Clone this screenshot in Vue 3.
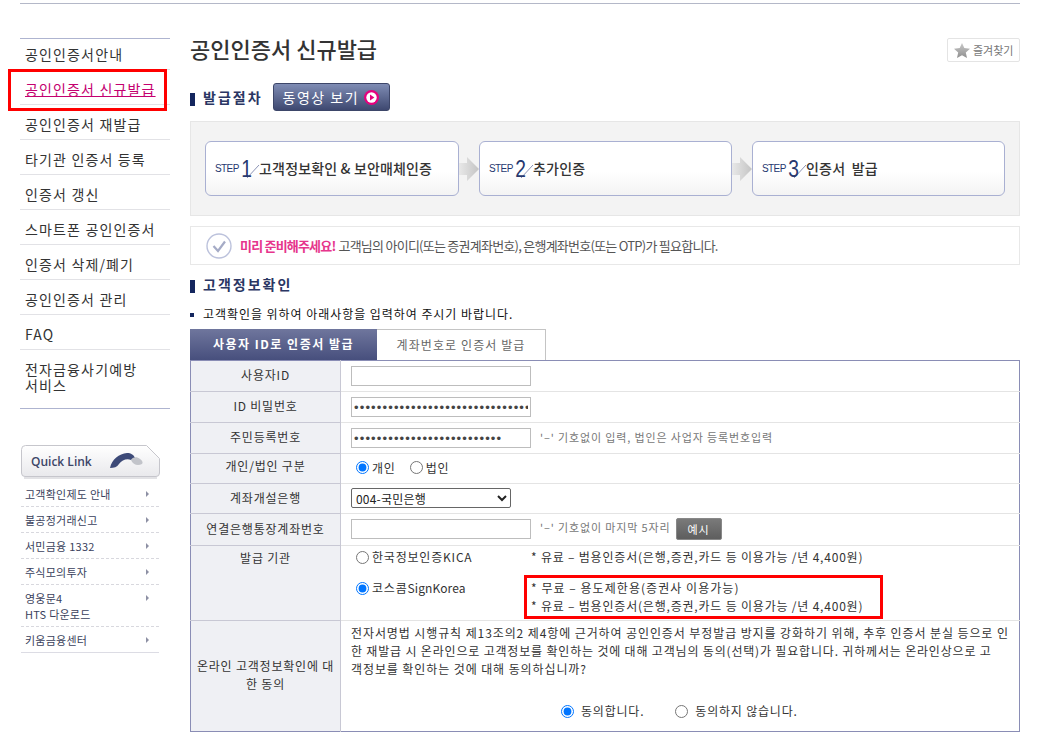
<script setup>
const menus = [
  { name: '공인인증서안내' },
  { name: '공인인증서 신규발급', on: true },
  { name: '공인인증서 재발급' },
  { name: '타기관 인증서 등록' },
  { name: '인증서 갱신' },
  { name: '스마트폰 공인인증서' },
  { name: '인증서 삭제/폐기' },
  { name: '공인인증서 관리' },
  { name: 'FAQ' },
  { name: '전자금융사기예방\n서비스' }
];

const links = ['고객확인제도 안내', '불공정거래신고', '서민금융 1332', '주식모의투자', '영웅문4\nHTS 다운로드', '키움금융센터'];

const steps = [
  { no: 1, text: '고객정보확인 & 보안매체인증' },
  { no: 2, text: '추가인증' },
  { no: 3, text: '인증서  발급' }
];
</script>

<template>
  <div class="page">
    <div class="topline"></div>
    <div class="wrap">
      <aside class="side">
        <ul class="menu">
          <li v-for="m in menus" :key="m.name" :class="{ on: m.on }"><span>{{ m.name }}</span></li>
        </ul>

        <div class="quick">
          <svg class="quick-bg" width="140" height="35" viewBox="0 0 140 35">
            <defs>
              <linearGradient id="qb" x1="0" y1="0" x2="0" y2="1">
                <stop offset="0" stop-color="#ffffff" />
                <stop offset="1" stop-color="#e9e9ec" />
              </linearGradient>
            </defs>
            <path d="M4.5 .5 H125.5 L138.5 13.5 V28 Q138.5 31.5 135 31.5 H4 Q.5 31.5 .5 28 V4.5 Q.5 .5 4.5 .5 Z" fill="url(#qb)" stroke="#c6c6cc" />
            <path d="M3 33 H136" stroke="#d8d8dc" stroke-width="1.5" />
          </svg>
          <span>Quick Link</span>
          <svg class="phone" width="34" height="16" viewBox="0 0 34 16">
            <path d="M0 15 C2 6 9 1 17 0 C21 0 24 2 25 5 L21 7 C17 5 12 7 9 11 C7 14 4 15 0 15 Z" fill="#3d4a78" />
            <path d="M21 7 C22 4 27 3 30 6 C33 8 33 10 32 11 C28 13 23 12 21 7 Z" fill="#c2c4ca" />
          </svg>
        </div>
        <ul class="links">
          <li v-for="l in links" :key="l"><span>{{ l }}</span><i></i></li>
        </ul>
      </aside>

      <main class="main">
        <div class="title-row">
          <h1>공인인증서 신규발급</h1>
          <a class="fav">
            <svg width="16" height="15" viewBox="0 0 16 15">
              <defs>
                <linearGradient id="star" x1="0" y1="0" x2="0" y2="1">
                  <stop offset="0" stop-color="#c9c9c9" />
                  <stop offset="1" stop-color="#8f8f8f" />
                </linearGradient>
              </defs>
              <polygon points="8,0 10.3,5 16,5.7 11.8,9.4 13,15 8,12.2 3,15 4.2,9.4 0,5.7 5.7,5" fill="url(#star)" />
            </svg>
            즐겨찾기
          </a>
        </div>

        <div class="head-row">
          <h2>발급절차</h2>
          <a class="movie">
            동영상 보기
            <svg width="15" height="15" viewBox="0 0 15 15">
              <circle cx="7.5" cy="7.5" r="7.5" fill="#e6007e" />
              <circle cx="7.5" cy="7.5" r="5.2" fill="#fff" />
              <polygon points="6,4.4 10.4,7.5 6,10.6" fill="#e6007e" />
            </svg>
          </a>
        </div>

        <div class="steps">
          <template v-for="(s, i) in steps" :key="s.no">
            <svg v-if="i > 0" class="arrow" width="20" height="24" viewBox="0 0 20 24">
              <defs>
                <linearGradient :id="'ar' + i" x1="0" y1="0" x2="1" y2="0">
                  <stop offset="0" stop-color="#e8e8e8" />
                  <stop offset="1" stop-color="#c4c4c4" />
                </linearGradient>
              </defs>
              <polygon points="0,6 8,6 8,0 20,12 8,24 8,18 0,18" :fill="'url(#ar' + i + ')'" />
            </svg>
            <div class="step">
              <span class="st">STEP</span>
              <span class="no">{{ s.no }}</span>
              <svg class="slash" width="14" height="20" viewBox="0 0 14 20">
                <line x1="1" y1="19" x2="13" y2="6" stroke="#8b93b5" stroke-width="1" />
              </svg>
              <span class="tx">{{ s.text }}</span>
            </div>
          </template>
        </div>

        <div class="notice">
          <svg width="26" height="26" viewBox="0 0 26 26">
            <circle cx="13" cy="13" r="12" fill="#fff" stroke="#bcc2dc" stroke-width="1.4" />
            <path d="M7.5 13 L12 18 L19 8.5" fill="none" stroke="#a5abc6" stroke-width="2.2" />
          </svg>
          <b>미리 준비해주세요!</b>
          <span>고객님의 아이디(또는 증권계좌번호), 은행계좌번호(또는 OTP)가 필요합니다.</span>
        </div>

        <h2 class="sec">고객정보확인</h2>
        <p class="bullet">고객확인을 위하여 아래사항을 입력하여 주시기 바랍니다.</p>

        <div class="tabs">
          <a class="tab on">사용자 ID로 인증서 발급</a>
          <a class="tab">계좌번호로 인증서 발급</a>
        </div>

        <table class="form">
          <tbody>
            <tr class="h31">
              <th>사용자ID</th>
              <td><input class="ipt" type="text" /></td>
            </tr>
            <tr class="h31">
              <th>ID 비밀번호</th>
              <td><input class="ipt pw" type="password" value="abcdefghijklmnopqrstuvwxyz0123456789" /></td>
            </tr>
            <tr class="h31">
              <th>주민등록번호</th>
              <td>
                <input class="ipt pw" type="password" value="abcdefghijklmnopqrstuvwxyz" />
                <span class="hint">'–' 기호없이 입력, 법인은 사업자 등록번호입력</span>
              </td>
            </tr>
            <tr class="h30">
              <th class="up">개인/법인 구분</th>
              <td class="radios">
                <label><input type="radio" name="kind" checked />개인</label>
                <label><input type="radio" name="kind" />법인</label>
              </td>
            </tr>
            <tr class="h30">
              <th>계좌개설은행</th>
              <td class="lift">
                <select class="bank"><option>004-국민은행</option></select>
              </td>
            </tr>
            <tr class="h32">
              <th>연결은행통장계좌번호</th>
              <td class="lift">
                <input class="ipt" type="text" />
                <span class="hint">'–' 기호없이 마지막 5자리</span>
                <a class="ex">예시</a>
              </td>
            </tr>
            <tr class="h75">
              <th class="top">발급 기관</th>
              <td class="issuer">
                <div class="iss-row first">
                  <label><input type="radio" name="org" />한국정보인증KICA</label>
                  <p>* 유료 – 범용인증서(은행,증권,카드 등 이용가능 /년 4,400원)</p>
                </div>
                <div class="iss-row">
                  <label><input type="radio" name="org" checked />코스콤<span class="latin">SignKorea</span></label>
                  <div>
                    <p class="wide">* 무료 – 용도제한용(증권사 이용가능)</p>
                    <p>* 유료 – 범용인증서(은행,증권,카드 등 이용가능 /년 4,400원)</p>
                  </div>
                </div>
              </td>
            </tr>
            <tr class="h111">
              <th>온라인 고객정보확인에 대<br />한 동의</th>
              <td class="consent">
                <p>전자서명법 시행규칙 제13조의2 제4항에 근거하여 공인인증서 부정발급 방지를 강화하기 위해, 추후 인증서 분실 등으로 인</p>
                <p>한 재발급 시 온라인으로 고객정보를 확인하는 것에 대해 고객님의 동의(선택)가 필요합니다. 귀하께서는 온라인상으로 고</p>
                <p>객정보를 확인하는 것에 대해 동의하십니까?</p>
                <div class="agree">
                  <label><input type="radio" name="agree" checked />동의합니다.</label>
                  <label><input type="radio" name="agree" />동의하지 않습니다.</label>
                </div>
              </td>
            </tr>
          </tbody>
        </table>
      </main>
    </div>

    <div class="mark mark-menu"></div>
    <div class="mark mark-fee"></div>
  </div>
</template>

<style>
html,
body {
  margin: 0;
  background: #fff;
}
</style>

<style scoped>
.page {
  position: relative;
  width: 1047px;
  height: 739px;
  overflow: hidden;
  font-family: "Noto Sans CJK KR", "Liberation Sans", sans-serif;
  font-size: 12px;
  color: #333;
}

.topline {
  height: 1px;
  margin: 3px 27px 0 20px;
  background: #b4b8c8;
}

.wrap {
  display: flex;
  gap: 20px;
  padding-left: 20px;
}

ul {
  list-style: none;
  margin: 0;
  padding: 0;
}

p,
h1,
h2 {
  margin: 0;
}

.side {
  width: 150px;
  padding-top: 34px;
}

.menu {
  border-top: 1px solid #aeb4d0;
  border-bottom: 1px solid #aeb4d0;
}

.menu li {
  padding: 11px 0 7px 5px;
  height: 16px;
  line-height: 16px;
  font-size: 14px;
  letter-spacing: 1.15px;
  white-space: pre-line;
  color: #333;
  border-bottom: 1px solid #e2e2e6;
}

.menu li:first-child {
  padding-top: 7px;
}

.menu li:last-child {
  height: 32px;
  padding-bottom: 15px;
  border-bottom: 0;
}

.menu li.on span {
  color: #c4006f;
  text-decoration: underline;
}

.quick {
  position: relative;
  display: flex;
  align-items: center;
  justify-content: space-between;
  box-sizing: border-box;
  width: 139px;
  height: 32px;
  margin: 36px 0 0 1px;
  padding: 0 16px 0 10px;
  font-family: "Open Sans", sans-serif;
  font-size: 12px;
  font-weight: 600;
  color: #3d4668;
}

.quick-bg {
  position: absolute;
  left: 0;
  top: 0;
}

.quick span,
.phone {
  position: relative;
}

.links {
  margin: 4px 0 0 1px;
  border-bottom: 1px solid #dcdce4;
  width: 138px;
}

.links li {
  position: relative;
  padding: 5px 0 4px 4px;
  line-height: 16px;
  font-size: 11px;
  letter-spacing: 0.25px;
  color: #3a3f5c;
  white-space: pre-line;
  border-bottom: 1px dashed #d8d8de;
}

.links li:last-child {
  border-bottom: 0;
}

.links i {
  position: absolute;
  top: 10px;
  right: 10px;
  border-left: 3px solid #8d90a4;
  border-top: 3px solid transparent;
  border-bottom: 3px solid transparent;
}

.main {
  width: 830px;
  padding-top: 30px;
}

.title-row {
  display: flex;
  justify-content: space-between;
  align-items: flex-start;
  height: 49px;
}

h1 {
  font-size: 22px;
  line-height: 28px;
  font-weight: 500;
  color: #333;
}

.fav {
  display: flex;
  align-items: center;
  gap: 3px;
  box-sizing: border-box;
  width: 73px;
  height: 24px;
  margin-top: 4px;
  padding-left: 6px;
  border: 1px solid #e4e4e4;
  border-radius: 2px;
  font-size: 11px;
  color: #777;
}

.head-row {
  display: flex;
  align-items: center;
  gap: 10px;
  height: 28px;
}

h2 {
  position: relative;
  padding-left: 13px;
  font-size: 14px;
  line-height: 18px;
  font-weight: 700;
  letter-spacing: 2px;
  color: #2a3663;
}

h2::before {
  content: "";
  position: absolute;
  left: 0;
  top: 5px;
  width: 5px;
  height: 13px;
  background: #14265e;
}

.movie {
  display: flex;
  align-items: center;
  gap: 5px;
  box-sizing: border-box;
  width: 117px;
  height: 28px;
  padding-left: 9px;
  border: 1px solid #3d4669;
  border-radius: 3px;
  background: linear-gradient(#7f8cb4, #3e4870);
  font-size: 14px;
  letter-spacing: 1.5px;
  color: #fff;
}

.steps {
  display: flex;
  align-items: center;
  box-sizing: border-box;
  height: 95px;
  margin-top: 10px;
  padding: 0 14px;
  border: 1px solid #e6e6e6;
  background: #f3f3f3;
}

.step {
  display: flex;
  flex: none;
  align-items: center;
  box-sizing: border-box;
  width: 253px;
  height: 55px;
  padding-left: 9px;
  border: 1px solid #a9b0d2;
  border-radius: 6px;
  background: linear-gradient(#fff 55%, #f3f3f3);
}

.step:first-of-type {
  width: 254px;
}

.arrow {
  flex: none;
}

.st {
  font-family: "Liberation Sans", sans-serif;
  font-size: 10px;
  letter-spacing: -0.6px;
  color: #26386f;
}

.no {
  margin-left: 1px;
  font-family: "Liberation Sans", sans-serif;
  font-size: 24px;
  line-height: 24px;
  color: #26386f;
  transform: scaleX(0.8);
}

.slash {
  margin-left: -7px;
}

.tx {
  margin-left: -1px;
  padding-bottom: 2px;
  font-size: 14px;
  font-weight: 500;
  letter-spacing: 0.15px;
  white-space: pre;
  color: #333;
}

.notice {
  display: flex;
  align-items: center;
  box-sizing: border-box;
  height: 39px;
  margin-top: 10px;
  padding-left: 15px;
  border: 1px solid #e8e8e8;
  font-size: 13px;
  letter-spacing: -0.75px;
  color: #555;
}

.notice b {
  margin: 0 3px 0 8px;
  letter-spacing: -0.8px;
  color: #e6358c;
}

.sec {
  margin-top: 10px;
}

.bullet {
  position: relative;
  margin-top: 12px;
  padding-left: 13px;
  line-height: 18px;
  letter-spacing: 0.95px;
  color: #111;
}

.bullet::before {
  content: "";
  position: absolute;
  left: 0;
  top: 8px;
  width: 4px;
  height: 4px;
  background: #14265e;
}

.tabs {
  display: flex;
  margin-top: 6px;
  height: 31px;
}

.tab {
  box-sizing: border-box;
  width: 169px;
  line-height: 30px;
  text-align: center;
  letter-spacing: 1.1px;
  color: #666;
  border: 1px solid #c4c4c4;
  border-bottom: 0;
  border-left: 0;
}

.tab.on {
  width: 187px;
  border: 0;
  font-weight: 700;
  letter-spacing: 1.5px;
  color: #fff;
  background: linear-gradient(#6f769d, #474f7d);
}

.form {
  width: 830px;
  table-layout: fixed;
  border-collapse: collapse;
  border: 1px solid #8a8db5;
  letter-spacing: 0.8px;
}

.form th {
  box-sizing: border-box;
  width: 150px;
  padding: 0 0 2px;
  font-weight: 400;
  color: #333;
  background: #eff0f4;
  border-bottom: 1px solid #c8c8d4;
  border-right: 1px solid #c8c8d4;
  line-height: 18px;
}

.form th.up {
  padding-bottom: 5px;
}

.form th.top {
  vertical-align: top;
  padding-top: 3px;
}

.form td {
  padding: 0 0 0 10px;
  border-bottom: 1px solid #e4e4e4;
  color: #333;
}

.form td.lift {
  padding-bottom: 2px;
}

.form td.radios {
  padding-bottom: 2px;
}

.form tr:last-child th,
.form tr:last-child td {
  border-bottom: 0;
}

.h31 {
  height: 31px;
}

.h30 {
  height: 30px;
}

.h32 {
  height: 32px;
}

.h75 {
  height: 75px;
}

.h111 {
  height: 111px;
}

.ipt {
  box-sizing: border-box;
  width: 180px;
  height: 20px;
  padding: 0 2px;
  border: 1px solid #bdbdbd;
  vertical-align: middle;
  outline: 0;
}

.pw {
  font-family: "Liberation Sans", sans-serif;
  font-size: 13px;
  letter-spacing: 1.15px;
  color: #444;
}

.hint {
  margin-left: 9px;
  font-size: 11px;
  letter-spacing: 0.87px;
  color: #777;
}

label {
  display: inline-flex;
  align-items: center;
}

input[type="radio"] {
  margin: 0 3px 0 5px;
}

.radios label + label {
  margin-left: 9px;
}

.bank {
  width: 160px;
  height: 20px;
  font-family: inherit;
  font-size: 12px;
  letter-spacing: 0.2px;
  color: #222;
  background: #fff;
  border: 1px solid #666;
  border-radius: 2px;
}

.ex {
  display: inline-block;
  width: 46px;
  height: 22px;
  margin-left: 5px;
  line-height: 21px;
  box-sizing: border-box;
  border: 1px solid #888;
  border-radius: 2px;
  text-align: center;
  font-size: 11px;
  color: #fff;
  background: linear-gradient(#7a7a7a, #5e5e5e);
  vertical-align: middle;
}

.form td.issuer {
  vertical-align: top;
  padding-top: 2px;
}

.iss-row {
  display: grid;
  grid-template-columns: 180px 1fr;
  line-height: 18px;
}

.iss-row.first {
  margin-bottom: 13px;
}

.iss-row label {
  align-self: start;
}

.latin {
  letter-spacing: 0.1px;
}

.wide {
  letter-spacing: 1.05px;
}

.form td.consent {
  vertical-align: top;
  padding-top: 3px;
  line-height: 18px;
  letter-spacing: 0.9px;
  white-space: nowrap;
}

.consent p:nth-child(2) {
  letter-spacing: 0.82px;
}

.agree {
  display: flex;
  gap: 26px;
  margin: 24px 0 0 205px;
  letter-spacing: 0.8px;
}

.agree input[type="radio"] {
  margin-right: 7px;
}

.mark {
  position: absolute;
  box-sizing: border-box;
  border: 3px solid #f00;
}

.mark-menu {
  left: 8px;
  top: 69px;
  width: 159px;
  height: 42px;
}

.mark-fee {
  left: 524px;
  top: 575px;
  width: 359px;
  height: 44px;
}
</style>
